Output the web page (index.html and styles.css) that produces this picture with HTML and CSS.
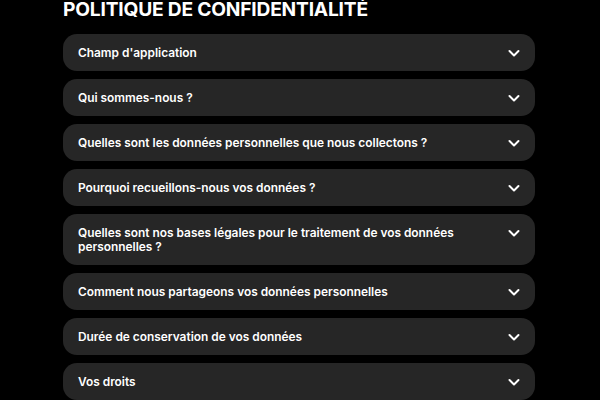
FILE: index.html
```html
<!DOCTYPE html>
<html lang="fr">
<head>
<meta charset="utf-8">
<link rel="stylesheet" href="styles.css">
</head>
<body>
<main class="page">
  <h1 class="title">POLITIQUE DE CONFIDENTIALITÉ</h1>
  <div class="list">
    <div class="item"><span class="label">Champ d'application</span><svg class="chev" viewBox="0 0 16 16"><path d="M3.5 6l4.5 4.5L12.5 6"/></svg></div>
    <div class="item"><span class="label">Qui sommes-nous ?</span><svg class="chev" viewBox="0 0 16 16"><path d="M3.5 6l4.5 4.5L12.5 6"/></svg></div>
    <div class="item"><span class="label">Quelles sont les données personnelles que nous collectons ?</span><svg class="chev" viewBox="0 0 16 16"><path d="M3.5 6l4.5 4.5L12.5 6"/></svg></div>
    <div class="item"><span class="label">Pourquoi recueillons-nous vos données ?</span><svg class="chev" viewBox="0 0 16 16"><path d="M3.5 6l4.5 4.5L12.5 6"/></svg></div>
    <div class="item"><span class="label">Quelles sont nos bases légales pour le traitement de vos données personnelles ?</span><svg class="chev" viewBox="0 0 16 16"><path d="M3.5 6l4.5 4.5L12.5 6"/></svg></div>
    <div class="item"><span class="label">Comment nous partageons vos données personnelles</span><svg class="chev" viewBox="0 0 16 16"><path d="M3.5 6l4.5 4.5L12.5 6"/></svg></div>
    <div class="item"><span class="label">Durée de conservation de vos données</span><svg class="chev" viewBox="0 0 16 16"><path d="M3.5 6l4.5 4.5L12.5 6"/></svg></div>
    <div class="item"><span class="label">Vos droits</span><svg class="chev" viewBox="0 0 16 16"><path d="M3.5 6l4.5 4.5L12.5 6"/></svg></div>
  </div>
</main>
</body>
</html>
```
FILE: styles.css
```css
html, body {
  margin: 0;
  padding: 0;
  background: #000;
  overflow: hidden;
}
body {
  font-family: Inter, "Liberation Sans", sans-serif;
  color: #fff;
}
.page {
  width: 472px;
  margin-left: 63px;
}
.title {
  font-size: 19.2px;
  line-height: 24px;
  font-weight: 700;
  margin: -3px 0 13px 0;
  letter-spacing: -0.2px;
}
.list {
  display: flex;
  flex-direction: column;
  gap: 8px;
}
.item {
  background: #262626;
  border-radius: 14px;
  padding: 11.5px 13px 11.5px 15px;
  display: flex;
  align-items: flex-start;
  justify-content: space-between;
  gap: 24px;
}
.label {
  font-size: 11.9px;
  line-height: 14px;
  font-weight: 600;
  max-width: 390px;
}
.chev {
  width: 16px;
  height: 16px;
  flex: none;
  margin: -1px 0 -1px 0;
  fill: none;
  stroke: #fff;
  stroke-width: 2;
  stroke-linecap: round;
  stroke-linejoin: round;
}
```
